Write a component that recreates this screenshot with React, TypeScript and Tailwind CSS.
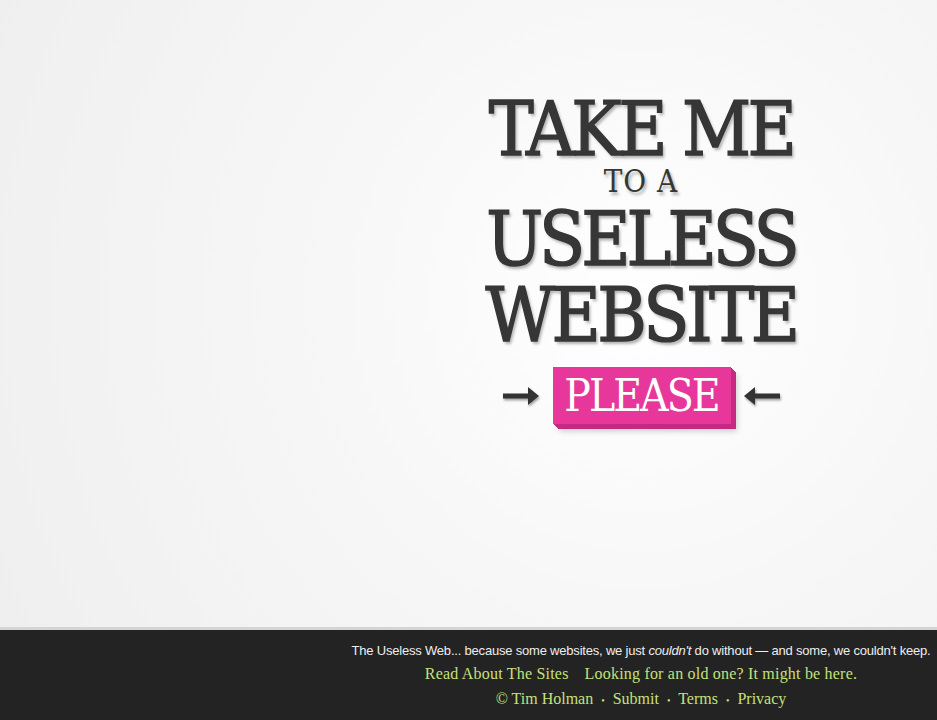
function Arrow({ flip }: { flip?: boolean }) {
  return (
    <svg
      width="37"
      height="24"
      viewBox="0 0 37 24"
      className={flip ? "-scale-x-100 drop-shadow-[-1px_2px_1px_rgba(0,0,0,0.35)]" : "drop-shadow-[1px_2px_1px_rgba(0,0,0,0.35)]"}
    >
      <path d="M0 9.5 H25 V3 L36 12 L25 21 V14.5 H0 Z" fill="#333" />
    </svg>
  );
}

export default function App() {
  const slab = "font-['DejaVu_Serif',serif] [font-stretch:condensed]";
  return (
    <div className="h-screen min-h-[720px] overflow-hidden flex flex-col bg-[radial-gradient(circle_at_640px_300px,#ffffff_0%,#f7f7f7_40%,#eeeeee_100%)]">
      <main className="flex-1 w-[1282px] flex flex-col items-center pt-[97px]">
        <h1 className={`${slab} text-[#363636] text-center [text-shadow:2px_3px_3px_rgba(0,0,0,0.3)]`}>
          <span className="block text-[75px] leading-[64px] tracking-[-3.5px] [-webkit-text-stroke:1.4px_#363636]">TAKE ME</span>
          <span className="block text-[31px] leading-[37px] tracking-[1px] mt-[2px]">TO A</span>
          <span className="block text-[75px] leading-[64px] tracking-[-4px] mt-[7px] [-webkit-text-stroke:1.4px_#363636]">USELESS</span>
          <span className="block text-[75px] leading-[64px] tracking-[-3.5px] mt-[12px] [-webkit-text-stroke:1.4px_#363636]">WEBSITE</span>
        </h1>
        <div className="flex items-center mt-[20px]">
          <Arrow />
          <button
            className={`${slab} ml-[13px] mr-[12px] w-[178px] h-[57px] bg-[#e8379a] text-white text-[44px] leading-[57px] tracking-[-2px] shadow-[1px_1px_0_#c42b80,2px_2px_0_#c42b80,3px_3px_0_#c42b80,4px_4px_0_#c42b80,5px_5px_0_#c42b80,6px_7px_6px_rgba(0,0,0,0.2)]`}
          >
            PLEASE
          </button>
          <Arrow flip />
        </div>
      </main>
      <footer className="h-[93px] shrink-0 border-t-[3px] border-[#d4d4d4] bg-[#232323]">
        <div className="w-[1282px] flex flex-col items-center pt-[12px]">
          <p className="font-['Liberation_Sans',sans-serif] text-[13px] leading-[18px] text-[#eeeeee] tracking-[-0.2px]">
            The Useless Web... because some websites, we just <em>couldn't</em> do without — and some, we couldn't keep.
          </p>
          <p className="font-['Liberation_Serif',serif] text-[16px] leading-[25px] text-[#c5e17a] mt-[1px] flex gap-[16px] tracking-[0.2px]">
            <a>Read About The Sites</a>
            <a>Looking for an old one? It might be here.</a>
          </p>
          <p className="font-['Liberation_Serif',serif] text-[16px] leading-[25px] text-[#c5e17a]">
            © Tim Holman <span className="text-[10px] mx-[4px]">•</span> Submit{" "}
            <span className="text-[10px] mx-[4px]">•</span> Terms <span className="text-[10px] mx-[4px]">•</span> Privacy
          </p>
        </div>
      </footer>
    </div>
  );
}
